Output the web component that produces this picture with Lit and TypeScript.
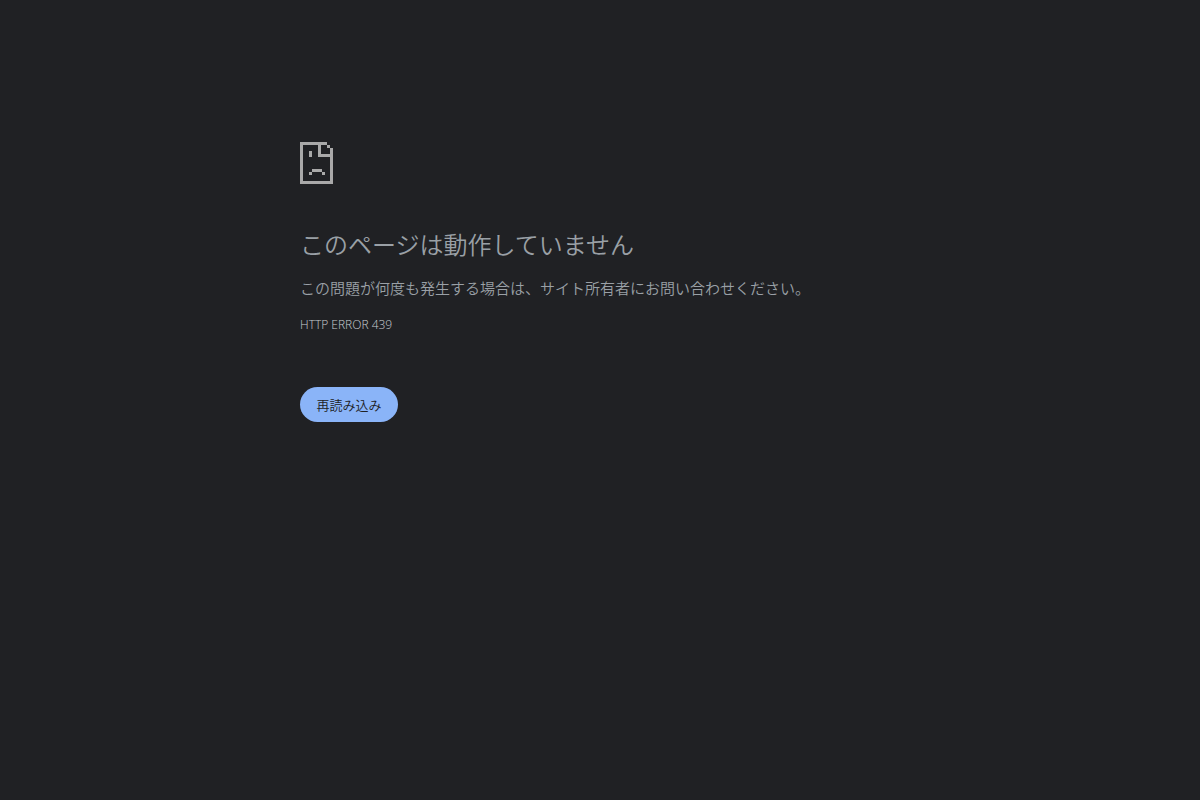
import { LitElement, html, css } from "lit";
import { customElement } from "lit/decorators.js";

@customElement("app-root")
export class AppRoot extends LitElement {
  static styles = css`
    :host {
      display: block;
      min-height: 100vh;
      box-sizing: border-box;
      padding: 142px 24px 40px;
      background: #202124;
      color: #9aa0a6;
      font-family: "Noto Sans CJK JP", sans-serif;
      font-size: 15px;
      line-height: 24px;
    }
    .content {
      max-width: 600px;
      margin: 0 auto;
    }
    .icon {
      display: block;
      width: 33px;
      height: 42px;
      fill: #a9a9a9;
    }
    .title {
      margin: 42px 0 14px;
      font-size: 24px;
      font-weight: 350;
      line-height: 36px;
    }
    .summary {
      margin: 0 0 13px;
      font-weight: 350;
    }
    .code {
      color: #c8cdd2;
      font-family: "Open Sans", sans-serif;
      font-size: 12px;
      font-weight: 300;
    }
    .reload {
      display: block;
      margin-top: 50px;
      padding: 0 16px;
      min-width: 98px;
      height: 35px;
      border: 0;
      border-radius: 20px;
      background: #8ab4f8;
      color: #202124;
      font-family: inherit;
      font-size: 13px;
      font-weight: 350;
      cursor: pointer;
    }
  `;

  private reload() {
    window.location.reload();
  }

  render() {
    return html`
      <main class="content">
        <svg class="icon" viewBox="0 0 33 42" shape-rendering="crispEdges" aria-hidden="true">
          <path d="M0 0H27V3H21V12H30V6H33V42H0ZM3 3V39H30V15H18V3Z" fill-rule="evenodd" />
          <path d="M27 3h3v3h-3zM9 9h3v6H9zM12 27h10v3H12zM9 30h3v3H9zM22 30h3v3h-3z" />
        </svg>
        <h1 class="title">このページは動作していません</h1>
        <p class="summary">この問題が何度も発生する場合は、サイト所有者にお問い合わせください。</p>
        <div class="code">HTTP ERROR 439</div>
        <button class="reload" type="button" @click=${this.reload}>再読み込み</button>
      </main>
    `;
  }
}
